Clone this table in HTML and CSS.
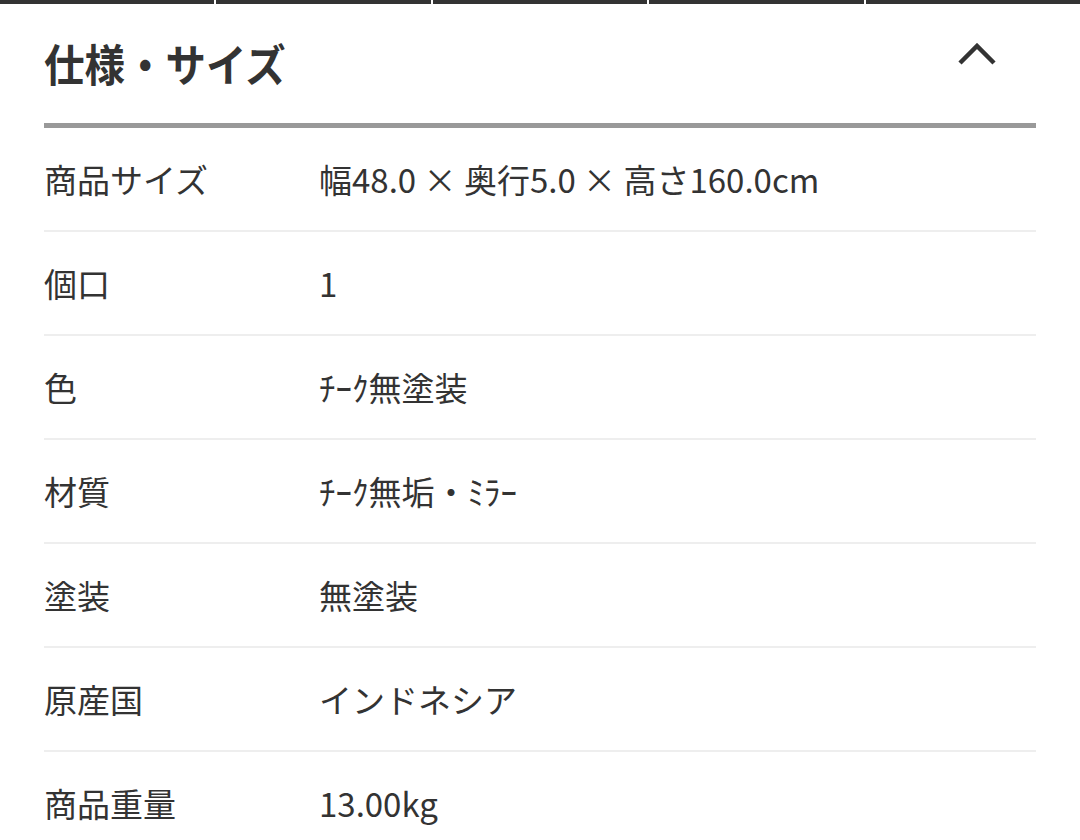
FILE: index.html
```html
<!DOCTYPE html>
<html lang="ja">
<head>
<meta charset="utf-8">
<link rel="stylesheet" href="styles.css">
</head>
<body>
<div class="tabs">
  <span class="tab"></span><span class="tab"></span><span class="tab"></span><span class="tab"></span><span class="tab"></span>
</div>
<section class="spec">
  <header class="spec-head">
    <h2 class="spec-title">仕様・サイズ</h2>
    <svg class="chevron" width="40" height="24" viewBox="0 0 40 24"><polyline points="2,20 19,3 36,20" fill="none" stroke="#333" stroke-width="4.5"/></svg>
  </header>
  <dl class="spec-list">
    <div class="row"><dt>商品サイズ</dt><dd>幅48.0 × 奥行5.0 × 高さ160.0cm</dd></div>
    <div class="row"><dt>個口</dt><dd>1</dd></div>
    <div class="row"><dt>色</dt><dd>ﾁｰｸ無塗装</dd></div>
    <div class="row"><dt>材質</dt><dd>ﾁｰｸ無垢・ﾐﾗｰ</dd></div>
    <div class="row"><dt>塗装</dt><dd>無塗装</dd></div>
    <div class="row"><dt>原産国</dt><dd>インドネシア</dd></div>
    <div class="row"><dt>商品重量</dt><dd>13.00kg</dd></div>
  </dl>
</section>
</body>
</html>
```
FILE: styles.css
```css
html, body {
  margin: 0;
  padding: 0;
  background: #fff;
  font-family: "Noto Sans CJK JP", "Noto Sans", sans-serif;
  color: #333;
  overflow: hidden;
}
.tabs {
  display: flex;
  gap: 2px;
  height: 4px;
}
.tab {
  flex: 1;
  background: #333;
}
.spec {
  padding: 0 44px;
}
.spec-head {
  height: 119px;
  display: flex;
  align-items: center;
  justify-content: space-between;
  border-bottom: 5px solid #999;
}
.spec-title {
  margin: 0;
  font-size: 44px;
  font-weight: 700;
  line-height: 1;
  position: relative;
  top: -1px;
  transform: scaleX(0.92);
  transform-origin: left center;
}
.chevron {
  margin-right: 38px;
  position: relative;
  top: -9px;
}
.spec-list {
  margin: 0;
}
.row {
  display: grid;
  grid-template-columns: 275px 1fr;
  align-items: center;
  height: 102px;
  border-bottom: 2px solid #eee;
  font-size: 33px;
}
.row dt {
  margin: 0;
  line-height: 1;
}
.row dd {
  margin: 0;
  line-height: 1;
}
```
